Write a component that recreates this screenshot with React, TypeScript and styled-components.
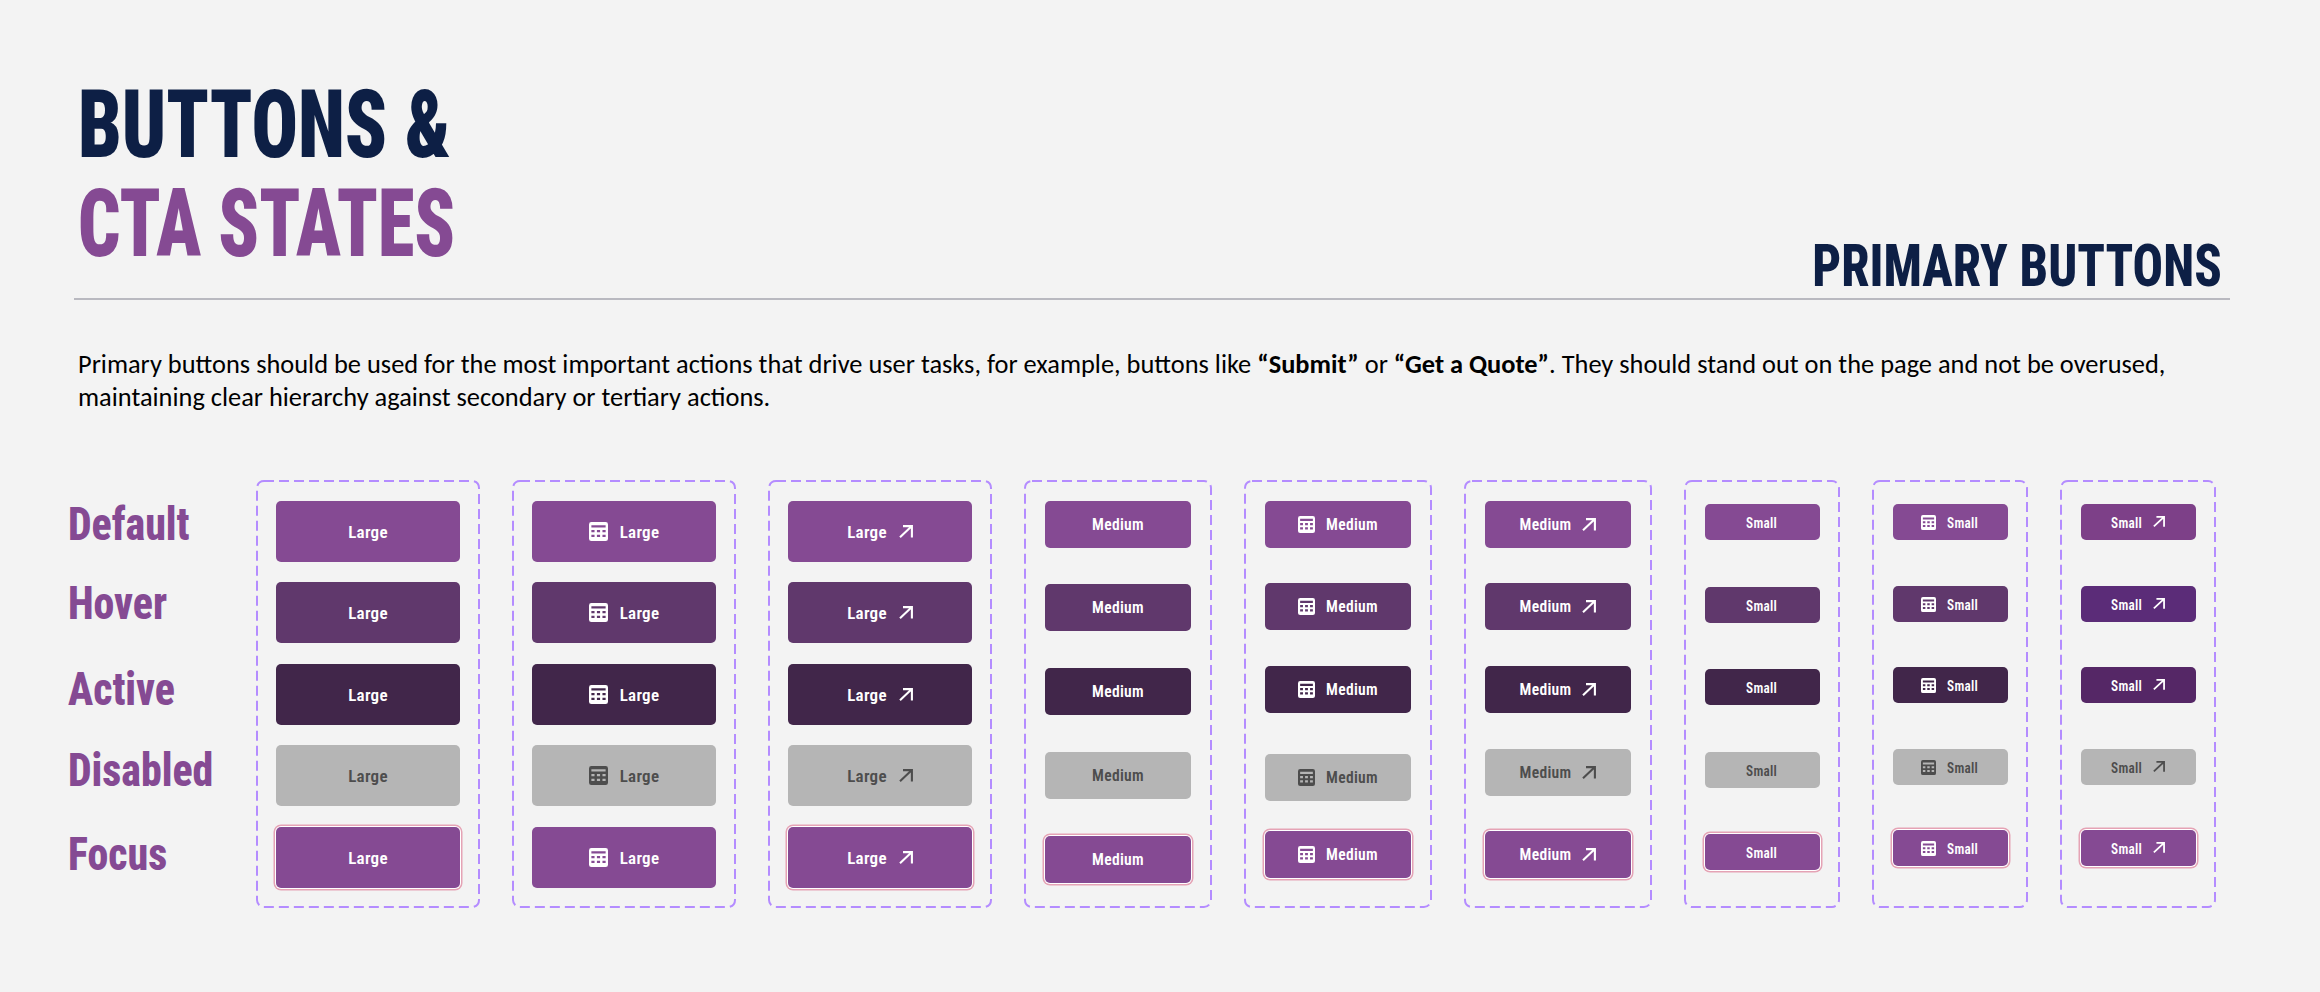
import styled, { createGlobalStyle } from 'styled-components';

const NARROW = '"Roboto Condensed", "Liberation Sans", sans-serif';

const GlobalStyle = createGlobalStyle`
    html, body {
        margin: 0;
        padding: 0;
        background: #f3f3f3;
    }
`;

type Size = 'large' | 'medium' | 'small';
type State = 'default' | 'hover' | 'active' | 'disabled' | 'focus';
type IconKind = 'none' | 'calc' | 'arrow';

const STATES: State[] = ['default', 'hover', 'active', 'disabled', 'focus'];

const FILLS: Record<State, string> = {
    default: '#854a93',
    hover: '#60386c',
    active: '#41264a',
    disabled: '#b5b5b5',
    focus: '#854a93',
};

const SIZES = {
    large: { cardWidth: 224, width: 184, height: 61, font: 17, squeeze: 1, gap: 12, calc: 19, arrow: 14 },
    medium: { cardWidth: 188, width: 146, height: 47, font: 15.6, squeeze: 1, gap: 11, calc: 17, arrow: 14 },
    small: { cardWidth: 156, width: 115, height: 36, font: 15, squeeze: 0.88, gap: 11, calc: 15, arrow: 12 },
};

const LABELS = [
    { text: 'Default', top: 0 },
    { text: 'Hover', top: 27 },
    { text: 'Active', top: 33.5 },
    { text: 'Disabled', top: 29.5 },
    { text: 'Focus', top: 32 },
];

interface Column {
    size: Size;
    icon: IconKind;
    gaps: number[];
    noRing?: boolean;
    fills?: Partial<Record<State, string>>;
}

const COLUMNS: Column[] = [
    { size: 'large', icon: 'none', gaps: [21, 20, 21, 20, 21] },
    { size: 'large', icon: 'calc', gaps: [21, 20, 21, 20, 21], noRing: true },
    { size: 'large', icon: 'arrow', gaps: [21, 20, 21, 20, 21] },
    { size: 'medium', icon: 'none', gaps: [21, 36, 37, 37, 37] },
    { size: 'medium', icon: 'calc', gaps: [21, 35, 36, 41, 30] },
    { size: 'medium', icon: 'arrow', gaps: [21, 35, 36, 36, 35] },
    { size: 'small', icon: 'none', gaps: [24, 47, 46, 47, 46] },
    { size: 'small', icon: 'calc', gaps: [24, 46, 45, 46, 45] },
    {
        size: 'small',
        icon: 'arrow',
        gaps: [24, 46, 45, 46, 45],
        fills: { default: '#7d4088', hover: '#5b2c78', active: '#552766' },
    },
];

const CalcIcon = ({ size }: { size: number }) => (
    <svg width={size} height={size} viewBox="0 0 24 24">
        <path
            fillRule="evenodd"
            fill="currentColor"
            d="M3 0h18a3 3 0 0 1 3 3v18a3 3 0 0 1-3 3H3a3 3 0 0 1-3-3V3a3 3 0 0 1 3-3zM3 4v3h18V4zM3 10v3h4v-3zM10 10v3h4v-3zM17 10v3h4v-3zM3 16v3h4v-3zM10 16v3h4v-3zM17 16v3h4v-3z"
        />
    </svg>
);

const ArrowIcon = ({ size }: { size: number }) => (
    <svg width={size} height={size * 0.93} viewBox="0 0 14 13" fill="none">
        <path d="M1 12.2 12.6 1.2M4 1.1h8.9V12.4" stroke="currentColor" strokeWidth="2.1" />
    </svg>
);

const App = () => (
    <Page>
        <GlobalStyle />
        <Header>
            <Title>
                <TitleLine $squeeze={0.82}>BUTTONS &amp;</TitleLine>
                <TitleLine $squeeze={0.79} $accent>
                    CTA STATES
                </TitleLine>
            </Title>
            <Section>PRIMARY BUTTONS</Section>
        </Header>

        <Intro>
            Primary buttons should be used for the most important actions that drive user tasks, for example, buttons
            like <b>“Submit”</b> or <b>“Get a Quote”</b>. They should stand out on the page and not be overused,
            <br />
            maintaining clear hierarchy against secondary or tertiary actions.
        </Intro>

        <Board>
            <Labels>
                {LABELS.map((label) => (
                    <Label key={label.text} $top={label.top}>
                        {label.text}
                    </Label>
                ))}
            </Labels>

            {COLUMNS.map((column, i) => {
                const spec = SIZES[column.size];
                const text = column.size[0].toUpperCase() + column.size.slice(1);
                return (
                    <Card key={i} $width={spec.cardWidth}>
                        <DashFrame>
                            <rect rx="7" ry="7" />
                        </DashFrame>
                        {STATES.map((state, row) => (
                            <Button
                                key={state}
                                $size={column.size}
                                $top={column.gaps[row]}
                                $fill={column.fills?.[state] ?? FILLS[state]}
                                $muted={state === 'disabled'}
                                $ring={state === 'focus' && !column.noRing}
                            >
                                {column.icon === 'calc' && <CalcIcon size={spec.calc} />}
                                <ButtonText $squeeze={spec.squeeze}>{text}</ButtonText>
                                {column.icon === 'arrow' && <ArrowIcon size={spec.arrow} />}
                            </Button>
                        ))}
                    </Card>
                );
            })}
        </Board>
    </Page>
);

export default App;

const Page = styled.div`
    width: 2320px;
    height: 992px;
    overflow: hidden;
    background: #f3f3f3;
    padding-top: 68px;
    box-sizing: border-box;
`;

const Header = styled.header`
    display: flex;
    justify-content: space-between;
    align-items: flex-end;
    margin: 0 90px 0 74px;
    height: 232px;
    box-sizing: border-box;
    border-bottom: 2px solid #b9b9c0;
`;

const Title = styled.h1`
    margin: 0 0 24px 4px;
    font: 900 94px/99px ${NARROW};
`;

const TitleLine = styled.div<{ $accent?: boolean; $squeeze: number }>`
    color: ${(props) => (props.$accent ? '#854a93' : '#0d1f45')};
    transform: scaleX(${(props) => props.$squeeze});
    transform-origin: left center;
    white-space: nowrap;
`;

const Section = styled.h2`
    margin: 0 8px 0 0;
    font: 800 60px/64px ${NARROW};
    color: #0d1f45;
    transform: scaleX(0.845);
    transform-origin: right center;
    white-space: nowrap;
`;

const Intro = styled.p`
    margin: 48px 0 0 78px;
    font: 400 26.4px/33px Carlito, Lato, sans-serif;
    color: #000;
    white-space: nowrap;

    b {
        font-weight: 700;
    }
`;

const Board = styled.section`
    display: flex;
    gap: 32px;
    margin: 66px 0 0 68px;
`;

const Labels = styled.div`
    width: 156px;
    padding-top: 18px;
`;

const Label = styled.div<{ $top: number }>`
    margin-top: ${(props) => props.$top}px;
    font: 800 46px/52px ${NARROW};
    color: #854a93;
    transform: scaleX(0.91);
    transform-origin: left center;
`;

const Card = styled.div<{ $width: number }>`
    position: relative;
    display: flex;
    flex-direction: column;
    align-items: center;
    width: ${(props) => props.$width}px;
    height: 428px;
    flex: none;
`;

const DashFrame = styled.svg`
    position: absolute;
    inset: 0;
    width: 100%;
    height: 100%;
    fill: none;

    rect {
        x: 1px;
        y: 1px;
        width: calc(100% - 2px);
        height: calc(100% - 2px);
        stroke: #b48cff;
        stroke-width: 2;
        stroke-dasharray: 10 5;
    }
`;

const Button = styled.div<{ $size: Size; $top: number; $fill: string; $muted: boolean; $ring: boolean }>`
    display: flex;
    align-items: center;
    justify-content: center;
    gap: ${(props) => SIZES[props.$size].gap}px;
    flex: none;
    width: ${(props) => SIZES[props.$size].width}px;
    height: ${(props) => SIZES[props.$size].height}px;
    margin-top: ${(props) => props.$top}px;
    border-radius: 5px;
    background: ${(props) => props.$fill};
    color: ${(props) => (props.$muted ? '#4d4d4d' : '#fff')};
    font: 600 ${(props) => SIZES[props.$size].font}px/1 ${NARROW};
    letter-spacing: 0.3px;
    box-shadow: ${(props) => (props.$ring ? '0 0 0 1px #fff, 0 0 0 2.5px #e5a3b5' : 'none')};
`;

const ButtonText = styled.span<{ $squeeze: number }>`
    display: inline-block;
    padding-top: 2px;
    width: fit-content;
    margin: 0 ${(props) => (props.$squeeze < 1 ? '-2px' : '0')};
    transform: scaleX(${(props) => props.$squeeze});
`;
